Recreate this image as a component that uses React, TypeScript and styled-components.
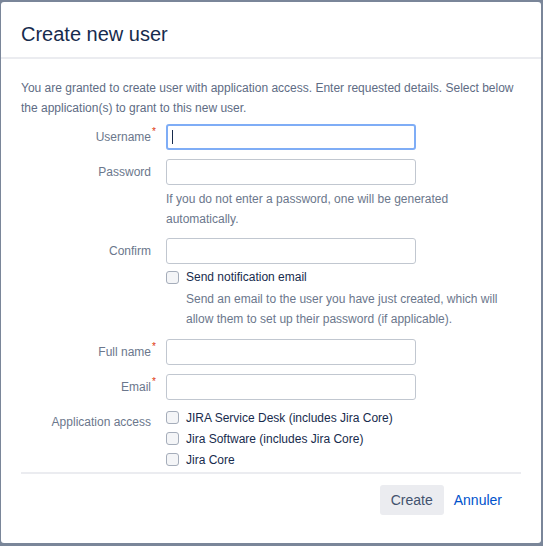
import styled, { createGlobalStyle } from "styled-components";

const GlobalStyle = createGlobalStyle`
    html, body {
        margin: 0;
        padding: 0;
        background: #7a8699;
    }

    body {
        font-family: "Liberation Sans", Arial, sans-serif;
        width: 543px;
        height: 546px;
        overflow: hidden;
    }
`;

const Dialog = styled.div`
    margin: 2px 0 0 1px;
    width: 540px;
    background: #ffffff;
    border-radius: 3px;
    box-sizing: border-box;
`;

const Header = styled.div`
    padding: 20px 20px 11px;
    border-bottom: 2px solid #ebecf0;
`;

const Title = styled.h2`
    margin: 0;
    font-size: 20px;
    line-height: 24px;
    font-weight: 400;
    color: #172b4d;
`;

const Content = styled.div`
    padding: 19px 20px 0 20px;
`;

const Intro = styled.p`
    margin: 0;
    font-size: 12px;
    line-height: 20px;
    color: #5e6c84;
`;

const FieldRow = styled.div<{ $top: number }>`
    display: grid;
    grid-template-columns: 130px 250px;
    column-gap: 15px;
    margin-top: ${(p) => p.$top}px;
`;

const Label = styled.label<{ $pad?: number }>`
    position: relative;
    text-align: right;
    font-size: 12px;
    line-height: ${(p) => (p.$pad ? "20px" : "26px")};
    padding-top: ${(p) => p.$pad ?? 0}px;
    color: #6b778c;
`;

const Required = styled.span`
    position: absolute;
    right: -5px;
    top: -5px;
    font-size: 10px;
    color: #de350b;
`;

const InputWrap = styled.div`
    position: relative;
    width: 250px;
`;

const TextInput = styled.input<{ $focused?: boolean }>`
    display: block;
    width: 250px;
    height: 26px;
    box-sizing: border-box;
    border: ${(p) => (p.$focused ? "2px solid #7fadf6" : "1px solid #c1c7d0")};
    border-radius: 3px;
    background: #ffffff;
    outline: none;
    padding: 0 6px;
    font: inherit;
`;

const Caret = styled.span`
    position: absolute;
    left: 6px;
    top: 6px;
    width: 1px;
    height: 14px;
    background: #172b4d;
`;

const Help = styled.div<{ $indent?: boolean; $top: number }>`
    grid-column: 2 / 4;
    width: 360px;
    margin-top: ${(p) => p.$top}px;
    padding-left: ${(p) => (p.$indent ? "20px" : "0")};
    font-size: 12px;
    line-height: 20px;
    color: #6b778c;
`;

const CheckList = styled.div`
    display: flex;
    flex-direction: column;
`;

const CheckRow = styled.div<{ $height: number }>`
    display: flex;
    align-items: center;
    gap: 7px;
    height: ${(p) => p.$height}px;
    font-size: 12px;
    color: #172b4d;
    white-space: nowrap;
`;

const Box = styled.span`
    width: 13px;
    height: 13px;
    box-sizing: border-box;
    border: 1px solid #a5adba;
    border-radius: 3px;
    background: #f4f5f7;
    flex-shrink: 0;
`;

const Footer = styled.div`
    margin-top: 2px;
    border-top: 2px solid #ebecf0;
    display: flex;
    justify-content: flex-end;
    align-items: center;
    padding: 11px 9px 28px 0;
`;

const Button = styled.button`
    height: 30px;
    padding: 0 11px;
    border: none;
    border-radius: 3px;
    background: #ebecf0;
    color: #42526e;
    font-family: inherit;
    font-size: 14px;
`;

const LinkButton = styled.a`
    margin-left: 10px;
    padding: 0 10px 0 0;
    font-size: 14px;
    color: #0052cc;
    text-decoration: none;
`;

const Field = ({
    label,
    required,
    top,
    focused,
}: {
    label: string;
    required?: boolean;
    top: number;
    focused?: boolean;
}) => (
    <FieldRow $top={top}>
        <Label>
            {label}
            {required && <Required>*</Required>}
        </Label>
        <InputWrap>
            <TextInput $focused={focused} />
            {focused && <Caret />}
        </InputWrap>
    </FieldRow>
);

const App = () => {
    return (
        <>
            <GlobalStyle />
            <Dialog>
                <Header>
                    <Title>Create new user</Title>
                </Header>
                <Content>
                    <Intro>
                        You are granted to create user with application access. Enter
                        requested details. Select below the application(s) to grant to this
                        new user.
                    </Intro>

                    <Field label="Username" required top={6} focused />

                    <FieldRow $top={9}>
                        <Label>Password</Label>
                        <InputWrap>
                            <TextInput type="password" />
                        </InputWrap>
                        <Help $top={4}>
                            If you do not enter a password, one will be generated
                            <br />
                            automatically.
                        </Help>
                    </FieldRow>

                    <FieldRow $top={9}>
                        <Label>Confirm</Label>
                        <InputWrap>
                            <TextInput type="password" />
                        </InputWrap>
                    </FieldRow>

                    <FieldRow $top={3}>
                        <span />
                        <CheckRow $height={20}>
                            <Box />
                            Send notification email
                        </CheckRow>
                        <Help $indent $top={2}>
                            Send an email to the user you have just created, which will
                            <br />
                            allow them to set up their password (if applicable).
                        </Help>
                    </FieldRow>

                    <Field label="Full name" required top={10} />
                    <Field label="Email" required top={9} />

                    <FieldRow $top={7}>
                        <Label $pad={5}>Application access</Label>
                        <CheckList>
                            <CheckRow $height={21}>
                                <Box />
                                JIRA Service Desk (includes Jira Core)
                            </CheckRow>
                            <CheckRow $height={21}>
                                <Box />
                                Jira Software (includes Jira Core)
                            </CheckRow>
                            <CheckRow $height={21}>
                                <Box />
                                Jira Core
                            </CheckRow>
                        </CheckList>
                    </FieldRow>

                    <Footer>
                        <Button>Create</Button>
                        <LinkButton href="#">Annuler</LinkButton>
                    </Footer>
                </Content>
            </Dialog>
        </>
    );
};

export default App;
